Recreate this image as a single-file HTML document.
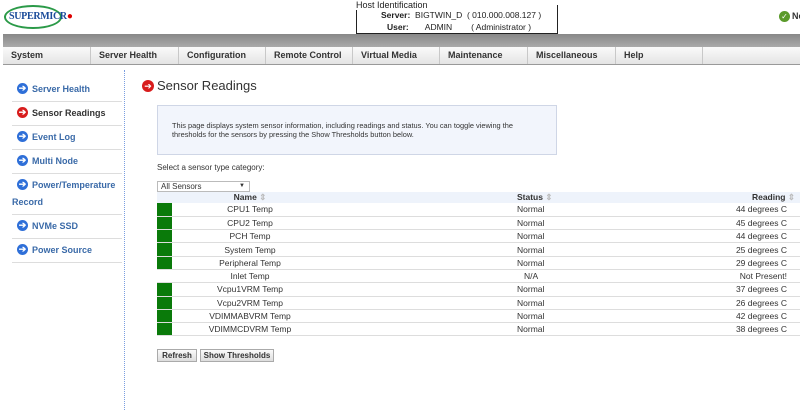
<!DOCTYPE html>
<html><head><style>
*{margin:0;padding:0;box-sizing:border-box}
body{width:800px;height:410px;overflow:hidden;background:#fff;font-family:"Liberation Sans",Arial,sans-serif;position:relative;color:#333}
.abs{position:absolute}
.menu{position:absolute;left:3px;top:47px;width:797px;height:18px;background:linear-gradient(#fafafa,#e4e4e4);border-bottom:1px solid #999}
.menu div{position:absolute;top:0;height:17px;line-height:17px;font-size:9px;font-weight:bold;color:#333;padding-left:8px;border-right:1px solid #c8c8c8}
.side a{position:absolute;left:12px;width:110px;font-size:9px;font-weight:bold;color:#3a6aa8;padding-left:20px;text-decoration:none}
.side .ic{position:absolute;left:5px;top:-1px;width:11px;height:11px;border-radius:50%;background:#2e6fd8;color:#fff;font-size:9px;line-height:10px;text-align:center}
.sep{position:absolute;left:12px;width:110px;border-top:1px solid #ddd}
table{position:absolute;left:157px;top:192px;width:643px;border-collapse:collapse;font-size:8.5px;color:#333;table-layout:fixed}
td,th{height:13.3px;padding:0;border-bottom:1px solid #ddd;white-space:nowrap}
th{background:#eef3fb;border:none;font-size:8.5px;height:11px}
.g{background:#0a7a0a}
.s{padding-left:189px}
.r{text-align:right;padding-right:13px}
</style></head><body>
<div class="abs" style="left:4px;top:5px;width:58px;height:24px;border:2px solid #2b9a48;border-radius:50%"></div>
<div class="abs" style="left:9px;top:11px;font-family:'Liberation Serif',serif;font-size:10px;color:#1a4b9a;font-weight:bold;letter-spacing:-0.3px">SUPERMICR<span style="color:#d00">●</span></div>
<div class="abs" style="left:356px;top:5px;width:202px;height:29px;border:1.5px solid #222;border-top:none"></div>
<div class="abs" style="left:356px;top:0;font-size:9px;background:#fff;padding-right:2px;color:#222">Host Identification</div>
<div class="abs" style="left:381px;top:10px;font-size:8.5px;color:#222"><b>Server:</b>&nbsp; BIGTWIN_D&nbsp; ( 010.000.008.127 )</div>
<div class="abs" style="left:387px;top:22px;font-size:8.5px;color:#222"><b>User:</b>&nbsp;&nbsp;&nbsp;&nbsp;&nbsp;&nbsp; ADMIN&nbsp;&nbsp;&nbsp;&nbsp;&nbsp;&nbsp;&nbsp; ( Administrator )</div>
<div class="abs" style="left:779px;top:11px;width:11px;height:11px;border-radius:50%;background:#5a9a2a;color:#fff;font-size:8px;text-align:center;line-height:11px">✓</div>
<div class="abs" style="left:792px;top:11px;font-size:9px;font-weight:bold;color:#333">Ne</div>
<div class="abs" style="left:3px;top:34px;width:797px;height:13px;background:linear-gradient(#888,#aaa)"></div>
<div class="menu">
<div style="left:0;width:88px">System</div><div style="left:88px;width:88px">Server Health</div><div style="left:176px;width:87px">Configuration</div><div style="left:263px;width:87px">Remote Control</div><div style="left:350px;width:87px">Virtual Media</div><div style="left:437px;width:88px">Maintenance</div><div style="left:525px;width:88px">Miscellaneous</div><div style="left:613px;width:87px">Help</div>
</div>
<div class="side">
<a style="top:84px"><span class="ic">➔</span>Server Health</a><div class="sep" style="top:101px"></div>
<a style="top:108px;color:#333"><span class="ic" style="background:#d81c1c">➔</span>Sensor Readings</a><div class="sep" style="top:125px"></div>
<a style="top:132px"><span class="ic">➔</span>Event Log</a><div class="sep" style="top:149px"></div>
<a style="top:156px"><span class="ic">➔</span>Multi Node</a><div class="sep" style="top:173px"></div>
<a style="top:180px"><span class="ic">➔</span>Power/Temperature</a>
<div class="abs" style="left:12px;top:197px;font-size:9px;font-weight:bold;color:#3a6aa8">Record</div><div class="sep" style="top:214px"></div>
<a style="top:221px"><span class="ic">➔</span>NVMe SSD</a><div class="sep" style="top:238px"></div>
<a style="top:245px"><span class="ic">➔</span>Power Source</a><div class="sep" style="top:262px"></div>
</div>
<div class="abs" style="left:124px;top:70px;height:340px;border-left:1px dotted #7a9ee0"></div>
<div class="abs" style="left:142px;top:80px;width:12px;height:12px;border-radius:50%;background:#d81c1c;color:#fff;font-size:9px;text-align:center;line-height:12px">➔</div>
<div class="abs" style="left:157px;top:78px;font-size:13px;color:#333">Sensor Readings</div>
<div class="abs" style="left:157px;top:105px;width:400px;height:50px;background:#f2f5fc;border:1px solid #cfd6e6"></div>
<div class="abs" style="left:172px;top:121px;font-size:7.4px;line-height:9px;color:#333;width:350px">This page displays system sensor information, including readings and status. You can toggle viewing the thresholds for the sensors by pressing the Show Thresholds button below.</div>
<div class="abs" style="left:157px;top:163px;font-size:8px;color:#333">Select a sensor type category:</div>
<div class="abs" style="left:157px;top:181px;width:93px;height:11px;border:1px solid #bbb;font-size:8px;line-height:9px;padding-left:3px">All Sensors<span style="position:absolute;right:4px;font-size:6px">▼</span></div>
<table>
<colgroup><col style="width:15px"><col style="width:156px"><col style="width:250px"><col></colgroup>
<tr><th></th><th style="text-align:center">Name <span style="color:#bbb">⇕</span></th><th class="s" style="text-align:left">Status <span style="color:#bbb">⇕</span></th><th style="text-align:right;padding-right:5px">Reading <span style="color:#bbb">⇕</span></th></tr>
<tr><td class="g"></td><td align=center>CPU1 Temp</td><td class="s">Normal</td><td class="r">44 degrees C</td></tr>
<tr><td class="g"></td><td align=center>CPU2 Temp</td><td class="s">Normal</td><td class="r">45 degrees C</td></tr>
<tr><td class="g"></td><td align=center>PCH Temp</td><td class="s">Normal</td><td class="r">44 degrees C</td></tr>
<tr><td class="g"></td><td align=center>System Temp</td><td class="s">Normal</td><td class="r">25 degrees C</td></tr>
<tr><td class="g"></td><td align=center>Peripheral Temp</td><td class="s">Normal</td><td class="r">29 degrees C</td></tr>
<tr><td></td><td align=center>Inlet Temp</td><td class="s" style="padding-left:196px">N/A</td><td class="r">Not Present!</td></tr>
<tr><td class="g"></td><td align=center>Vcpu1VRM Temp</td><td class="s">Normal</td><td class="r">37 degrees C</td></tr>
<tr><td class="g"></td><td align=center>Vcpu2VRM Temp</td><td class="s">Normal</td><td class="r">26 degrees C</td></tr>
<tr><td class="g"></td><td align=center>VDIMMABVRM Temp</td><td class="s">Normal</td><td class="r">42 degrees C</td></tr>
<tr><td class="g"></td><td align=center>VDIMMCDVRM Temp</td><td class="s">Normal</td><td class="r">38 degrees C</td></tr>
</table>
<div class="abs" style="left:157px;top:349px;width:40px;height:13px;border:1px solid #aaa;background:linear-gradient(#fafafa,#ddd);font-size:8px;font-weight:bold;text-align:center;line-height:11px">Refresh</div>
<div class="abs" style="left:200px;top:349px;width:74px;height:13px;border:1px solid #aaa;background:linear-gradient(#fafafa,#ddd);font-size:8px;font-weight:bold;text-align:center;line-height:11px">Show Thresholds</div>
</body></html>
